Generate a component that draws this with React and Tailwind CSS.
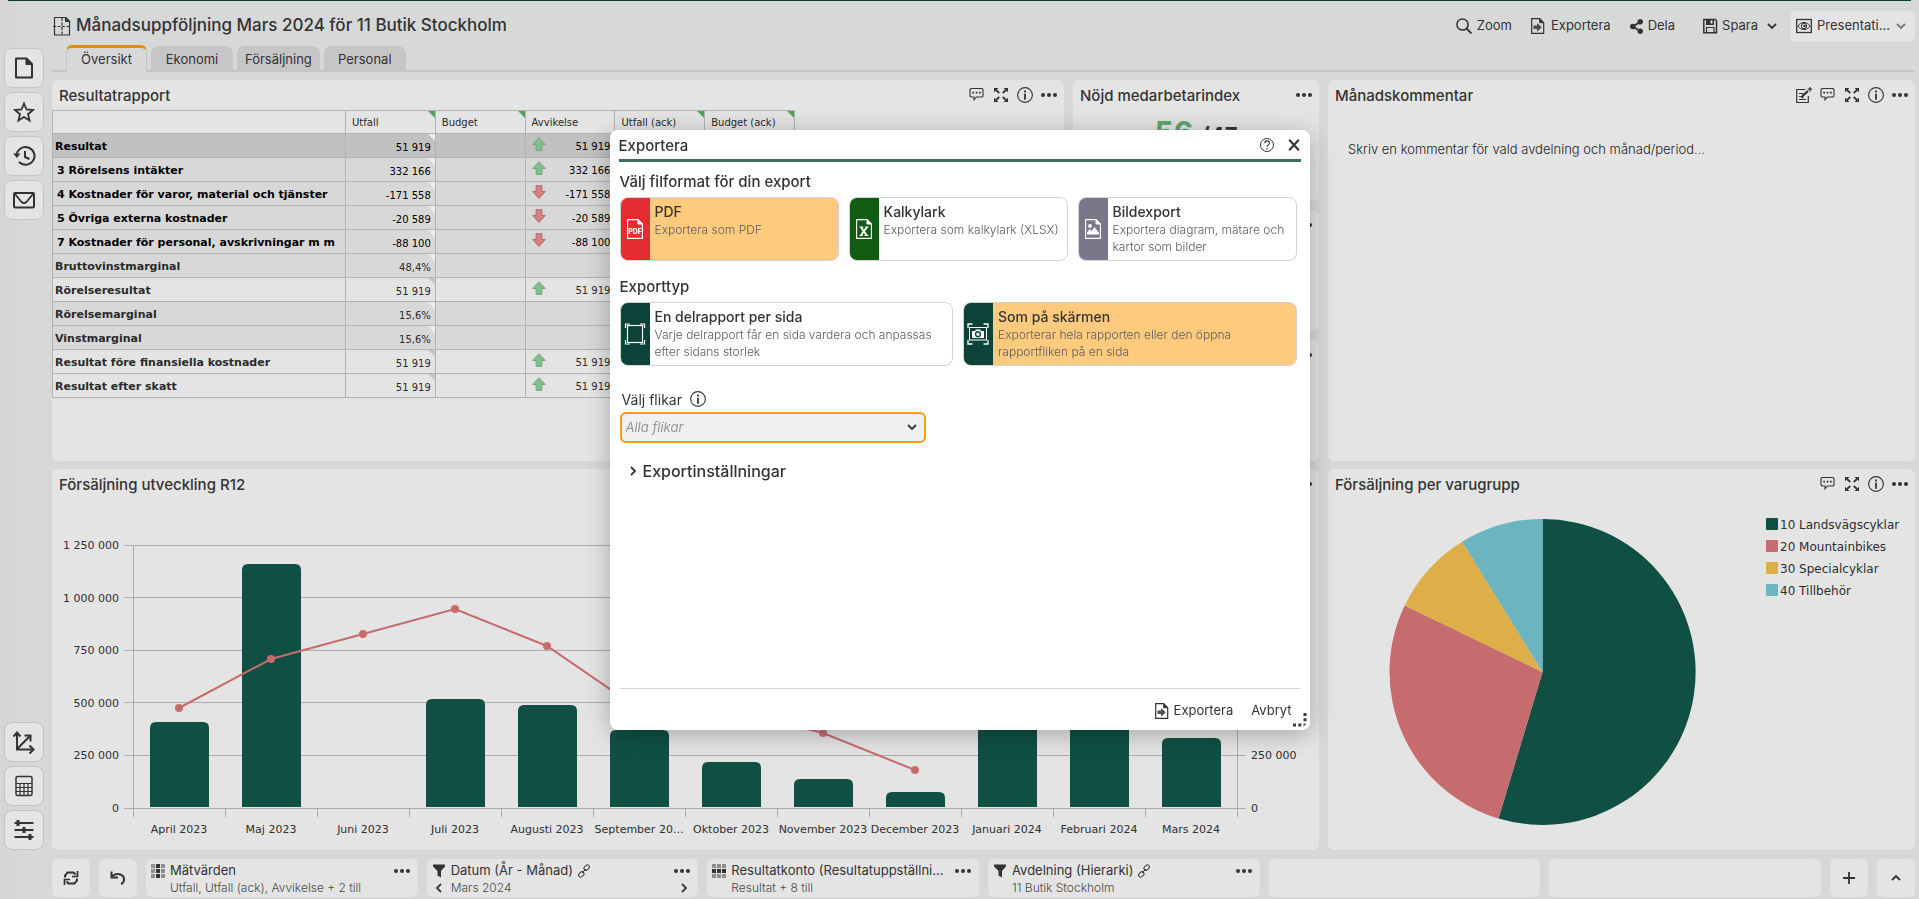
import React, { useState } from 'react';
import { FaShareAlt } from 'react-icons/fa';

const REPORT_ROWS = [
  { name: 'Resultat', value: '51 919', trend: 'up', tone: 'total' },
  { name: '3 Rörelsens intäkter', value: '332 166', trend: 'up', tone: 'sub' },
  { name: '4 Kostnader för varor, material och tjänster', value: '-171 558', trend: 'down', tone: 'sub' },
  { name: '5 Övriga externa kostnader', value: '-20 589', trend: 'down', tone: 'sub' },
  { name: '7 Kostnader för personal, avskrivningar m m', value: '-88 100', trend: 'down', tone: 'sub' },
  { name: 'Bruttovinstmarginal', value: '48,4%', tone: 'ratio' },
  { name: 'Rörelseresultat', value: '51 919', trend: 'up', tone: 'plain' },
  { name: 'Rörelsemarginal', value: '15,6%', tone: 'ratio' },
  { name: 'Vinstmarginal', value: '15,6%', tone: 'ratio' },
  { name: 'Resultat före finansiella kostnader', value: '51 919', trend: 'up', tone: 'plain' },
  { name: 'Resultat efter skatt', value: '51 919', trend: 'up', tone: 'plain' },
];

const ROW_TONES = {
  total: 'bg-[#c1c1c1] text-black',
  sub: 'bg-[#d8d8d8] text-black',
  ratio: 'bg-[#d8d8d8] text-[#2a2a2a]',
  plain: 'bg-[#e4e4e4] text-[#2a2a2a]',
};

const MONTHS = [
  { label: 'April 2023', bar: 86, line: 100 },
  { label: 'Maj 2023', bar: 244, line: 149 },
  { label: 'Juni 2023', bar: 0, line: 174 },
  { label: 'Juli 2023', bar: 109, line: 199 },
  { label: 'Augusti 2023', bar: 103, line: 162 },
  { label: 'September 20...', bar: 78, line: 99 },
  { label: 'Oktober 2023', bar: 46, line: 98 },
  { label: 'November 2023', bar: 29, line: 75 },
  { label: 'December 2023', bar: 16, line: 38 },
  { label: 'Januari 2024', bar: 110, line: null },
  { label: 'Februari 2024', bar: 120, line: null },
  { label: 'Mars 2024', bar: 70, line: null },
];

const LEVELS = ['0', '250 000', '500 000', '750 000', '1 000 000', '1 250 000'];

const LEGEND = [
  { label: '10 Landsvägscyklar', color: '#0f4f44' },
  { label: '20 Mountainbikes', color: '#c66b6e' },
  { label: '30 Specialcyklar', color: '#deaf48' },
  { label: '40 Tillbehör', color: '#6bb5c1' },
];

/* ---------- icons ---------- */

const Icon = ({ size = 16, box = 16, className = '', children }) => (
  <svg
    width={size}
    height={size}
    viewBox={`0 0 ${box} ${box}`}
    fill="none"
    stroke="currentColor"
    className={`shrink-0 ${className}`}
    aria-hidden="true"
  >
    {children}
  </svg>
);

const ReportIcon = () => (
  <Icon size={20} box={20}>
    <path d="M2.500 1.500h11l4 4v13.500h-15z" strokeWidth="1.200" />
    <path d="M13.500 1v4.500H18z" fill="currentColor" />
    <path d="M10 2v17M1 10.500h18" strokeWidth="1.200" strokeDasharray="3 1.500" />
  </Icon>
);

const PageIcon = () => (
  <Icon size={24} box={24}>
    <path d="M4 2.5h10.500L20 8v13.500H4z" strokeWidth="2" strokeLinejoin="round" />
    <path d="M14 2.500V8.500h6z" fill="currentColor" />
  </Icon>
);

const StarIcon = () => (
  <Icon size={24} box={24}>
    <path d="M12 3.500l2.500 6 6.500.500-5 4.200 1.600 6.300L12 17l-5.600 3.500L8 14.200 3 10l6.500-.5z" strokeWidth="1.800" />
  </Icon>
);

const HistoryIcon = () => (
  <Icon size={24} box={24}>
    <path d="M4.500 11.500A9 8.800 0 1 1 7 18" strokeWidth="2" />
    <path d="M1 9.500l4 4.500 3.500-4.500z" fill="currentColor" stroke="none" />
    <path d="M13 7v6l4.500 2" strokeWidth="2" />
  </Icon>
);

const MailIcon = () => (
  <Icon size={24} box={24}>
    <rect x="2" y="5" width="20" height="14.500" rx="1" strokeWidth="2" />
    <path d="M3 6l6.500 8a3.500 3.500 0 0 0 5 0L21 6" strokeWidth="1.800" />
  </Icon>
);

const AxesIcon = () => (
  <Icon size={24} box={24}>
    <path d="M5 3v16.500h16M5 19L18 6" strokeWidth="2" />
    <path d="M1.500 6.500L5 2.500l3.500 4M17.500 15.500l4 4-4 4M12.500 5.500h6v6" strokeWidth="2" />
  </Icon>
);

const CalculatorIcon = () => (
  <Icon size={24} box={24}>
    <rect x="4" y="2.500" width="16" height="19" rx="1.500" strokeWidth="1.500" />
    <path d="M4 9.500h16M4 13.500h16M4 17.500h16M8 9.500v12M12 9.500v12M16 9.500v12" strokeWidth="1.200" />
  </Icon>
);

const SlidersIcon = () => (
  <Icon size={24} box={24}>
    <path d="M2.500 5h19M2.500 12h19M2.500 19h19" strokeWidth="2" />
    <path d="M6 2v6M12 9v6M18 16v6" strokeWidth="3" />
  </Icon>
);

const SearchIcon = () => (
  <Icon>
    <circle cx="6.500" cy="6.500" r="5.600" strokeWidth="1.500" />
    <path d="M10.500 10.500l5 5" strokeWidth="1.800" />
  </Icon>
);

const ExportIcon = () => (
  <Icon>
    <path d="M1.700.7h8l4 4v10.600h-12z" strokeWidth="1.200" />
    <path d="M9.700.7v4h4z" fill="currentColor" />
    <path d="M3.500 7.500h3.500V4.900l4.800 4.400L7 13.700V11H3.500z" fill="currentColor" stroke="none" opacity=".85" />
  </Icon>
);

const SaveIcon = () => (
  <Icon>
    <path d="M1.800 1.500h11.500l1.200 1.300v12H1.800z" strokeWidth="1.500" />
    <path d="M4 1.500h8V7H4z" fill="currentColor" stroke="none" />
    <path d="M8.500 2.500h2v3h-2z" fill="#e4e4e4" stroke="none" />
    <path d="M4.500 15V9.500h7.500V15" strokeWidth="1.200" />
  </Icon>
);

const EyeIcon = () => (
  <Icon>
    <rect x=".7" y="1.500" width="14.600" height="13" strokeWidth="1.300" />
    <path d="M2 8c3-4.800 9-4.800 12 0-3 4.800-9 4.800-12 0z" />
    <circle cx="8" cy="8" r="2.700" />
    <circle cx="8.500" cy="8" r="1.300" fill="currentColor" stroke="none" />
  </Icon>
);

const ChevronIcon = ({ className = '' }) => (
  <Icon size={12} box={12} className={className}>
    <path d="M2 4l4 4 4-4" strokeWidth="1.800" />
  </Icon>
);

const CommentIcon = () => (
  <Icon>
    <path d="M2 1.500h11l1 1V9l-1 1H7.500L5 12.800V10H2L1 9V2.500z" strokeWidth="1.100" />
    <path d="M3.300 5.700H5M6.700 5.700h1.700M10 5.700h1.700" strokeWidth="1.700" />
  </Icon>
);

const ExpandIcon = () => (
  <Icon>
    <path d="M6.300 6L3 3M9.700 6L13 3M6.300 10L3 13M9.700 10l3.300 3" strokeWidth="1.700" />
    <path d="M1 1h4.500L1 5.300zM15 1h-4.500L15 5.300zM1 15h4.500L1 10.700zM15 15h-4.500l4.500-4.300z" fill="currentColor" stroke="none" />
  </Icon>
);

const InfoIcon = () => (
  <Icon>
    <circle cx="8" cy="8" r="7.400" strokeWidth="1.100" />
    <path d="M8 3.500v2M8 6.700v6" strokeWidth="1.800" />
  </Icon>
);

const DotsIcon = () => (
  <Icon>
    <g fill="currentColor" stroke="none">
      <circle cx="2" cy="8" r="2" />
      <circle cx="8" cy="8" r="2" />
      <circle cx="14" cy="8" r="2" />
    </g>
  </Icon>
);

const NoteIcon = () => (
  <Icon>
    <path d="M9.500 2.500H.7v13h11.600V9" strokeWidth="1.200" />
    <path d="M3 6.500h4M3 9.500h2.500M3 12.500h7" />
    <path d="M6 11l1-2.500L12 4" strokeWidth="2.200" />
    <path d="M14 0v4.500M11.800 2.200h4.400" strokeWidth="1.200" />
  </Icon>
);

const HelpIcon = () => (
  <Icon>
    <circle cx="8" cy="8" r="6.500" />
    <path d="M5.800 6.200c0-3.200 4.600-3 4.600-.2 0 1.900-2.300 1.900-2.300 4" strokeWidth="1.100" />
    <path d="M8 11.300v1.200" strokeWidth="1.300" />
  </Icon>
);

const CloseIcon = () => (
  <Icon size={14}>
    <path d="M2.500 2l11 12M13.500 2l-11 12" strokeWidth="2.300" />
  </Icon>
);

const RefreshIcon = () => (
  <Icon>
    <path d="M2 7.500V5.500l2.500-3h6l2 2M14 8.500v2l-2.500 3h-6l-2-2" strokeWidth="2" />
    <path d="M14.500 1v5.500H9M1.500 15V9.500H7" strokeWidth="1.700" />
  </Icon>
);

const UndoIcon = () => (
  <Icon>
    <path d="M2 6.500c4-4.500 12.500-2.500 12 3.500-.2 2-1.500 3.500-3 4" strokeWidth="2" />
    <path d="M1.500 1.500v6H8" strokeWidth="2" />
  </Icon>
);

const GridIcon = ({ axis }) => (
  <Icon size={14} box={14}>
    {[0, 1, 2].map((row) =>
      [0, 1, 2].map((col) => (
        <rect
          key={`${row}${col}`}
          x={col * 5}
          y={row * 5}
          width="4"
          height="4"
          stroke="none"
          fill={(axis === 'column' ? col : row) === 1 ? '#333333' : '#8e8e8e'}
        />
      ))
    )}
  </Icon>
);

const FilterIcon = () => (
  <Icon size={14} box={14}>
    <path d="M1 .5h12v2L9 7v6.500l-3.500-2V7L1 2.500z" fill="currentColor" stroke="none" />
  </Icon>
);

const LinkIcon = () => (
  <Icon size={14} box={14}>
    <rect x="7.700" y=".6" width="4" height="6" rx="2" transform="rotate(45 9.700 3.600)" />
    <rect x="2.300" y="7.400" width="4" height="6" rx="2" transform="rotate(45 4.300 10.400)" />
    <path d="M5 9l4-4" />
  </Icon>
);

const TrendArrow = ({ trend }) => (
  <Icon size={14} box={14} className={trend === 'down' ? 'rotate-180' : ''}>
    <path
      d="M7 .6L13.300 7.500H9.900V13.400H4.100V7.500H.7z"
      fill={trend === 'down' ? '#cc8484' : '#86bd8e'}
      stroke={trend === 'down' ? '#bd6468' : '#6aae76'}
    />
  </Icon>
);

const FileIcon = ({ children }) => (
  <svg width="16" height="20" viewBox="0 0 16 20" fill="none" stroke="#ffffff" aria-hidden="true">
    <path d="M.6.600h10.400l4.400 4.400v14.400H.6z" strokeWidth="1.100" />
    <path d="M11 .6V5h4.400z" fill="#ffffff" />
    {children}
  </svg>
);

const PdfIcon = () => (
  <FileIcon>
    <text x="8" y="15" textAnchor="middle" fill="#ffffff" stroke="none" className="font-['Inter',sans-serif] text-[7px] font-extrabold">
      PDF
    </text>
  </FileIcon>
);

const SheetIcon = () => (
  <FileIcon>
    <path d="M4.800 8l6 8.500M11 8l-6.200 8.500" strokeWidth="2" />
    <path d="M3.500 8h4M9 8h3.500M3.500 16.500H7M8.500 16.500h4" strokeWidth="1" />
  </FileIcon>
);

const ImageIcon = () => (
  <FileIcon>
    <circle cx="5" cy="7" r="1.900" fill="#ffffff" stroke="none" />
    <path d="M2 15.500v-2l2.500-3.500 2 2L9.500 8l4.500 6v1.500z" fill="#ffffff" stroke="none" />
  </FileIcon>
);

const FrameIcon = () => (
  <svg width="22" height="22" viewBox="0 0 22 22" fill="none" stroke="#ffffff" aria-hidden="true">
    <path d="M1.500 5V1H6M16 1h4.500v4M20.500 17v4H16M6 21H1.500v-4" strokeWidth="1.200" />
    <rect x="3.500" y="2.500" width="15" height="17" strokeWidth="1.200" />
  </svg>
);

const CameraIcon = () => (
  <svg width="22" height="22" viewBox="0 0 22 22" fill="none" stroke="#ffffff" aria-hidden="true">
    <path d="M1 5V1h4.500M16.500 1H21v4M21 17v4h-4.500M5.500 21H1v-4" strokeWidth="1.300" />
    <rect x="2.500" y="4.500" width="17" height="12.500" />
    <path d="M5 8h3l1-1.500h4L14 8h3v7H5z" fill="#ffffff" stroke="none" />
    <circle cx="11" cy="11.200" r="2.400" stroke="#0c4238" strokeWidth="1.400" />
  </svg>
);

/* ---------- building blocks ---------- */

const SideButton = ({ label, children }) => (
  <button
    aria-label={label}
    className="flex h-10 w-10 items-center justify-center rounded-lg border border-[#c3c3c3] bg-[#e4e4e4]"
  >
    {children}
  </button>
);

const Panel = ({ title, note, tools = true, className = '', children }) => (
  <section className={`flex min-w-0 flex-col rounded-md bg-[#e4e4e4] ${className}`}>
    <header className="flex h-[30px] items-center justify-between px-[7px]">
      <h2 className="truncate pt-[2px] text-[15px] font-medium">{title}</h2>
      <div className="flex items-center gap-2">
        {note && <button aria-label="Redigera"><NoteIcon /></button>}
        {tools && (
          <>
            <button aria-label="Kommentar"><CommentIcon /></button>
            <button aria-label="Maximera"><ExpandIcon /></button>
            <button aria-label="Information"><InfoIcon /></button>
          </>
        )}
        <button aria-label="Mer"><DotsIcon /></button>
      </div>
    </header>
    {children}
  </section>
);

const Corner = ({ className }) => (
  <svg width="7" height="7" viewBox="0 0 7 7" className={`absolute right-0 top-0 ${className}`} aria-hidden="true">
    <path d="M0 0h7v7z" fill="currentColor" />
  </svg>
);

const ReportTable = () => (
  <table className="w-[743px] table-fixed border-collapse font-['DejaVu_Sans',sans-serif] text-[10px]">
    <colgroup>
      <col className="w-[293px]" />
      <col />
      <col />
      <col />
      <col />
      <col />
    </colgroup>
    <thead>
      <tr className="h-[23px] text-left text-[#2a2a2a]">
        <th className="border border-[#b3b3b3]" aria-label="Konto" />
        {['Utfall', 'Budget', 'Avvikelse', 'Utfall (ack)', 'Budget (ack)'].map((title) => (
          <th key={title} className="relative border border-[#b3b3b3] px-1.5 font-normal">
            {title}
            {title !== 'Avvikelse' && <Corner className="text-[#4fa35f]" />}
          </th>
        ))}
      </tr>
    </thead>
    <tbody>
      {REPORT_ROWS.map((row) => (
        <tr key={row.name} className={`h-6 ${ROW_TONES[row.tone]}`}>
          <th
            className={`border border-[#b3b3b3] pt-[3px] text-left text-[11px] font-bold ${row.tone === 'sub' ? 'pl-1' : 'pl-[2px]'}`}
          >
            {row.name}
          </th>
          <td className="relative border border-[#b3b3b3] pt-[3px] pr-1 text-right">
            {row.value}
            <Corner className={row.tone === 'plain' ? 'text-[#c8c8c8]' : 'text-[#ededed]'} />
          </td>
          <td className="border border-[#b3b3b3]" />
          <td className="border border-[#b3b3b3] pl-1.5 pr-1">
            {row.trend && (
              <div className="flex items-center justify-between pb-[3px]">
                <TrendArrow trend={row.trend} />
                <span className="pt-1">{row.value}</span>
              </div>
            )}
          </td>
          <td className="border border-[#b3b3b3]" />
          <td className="border border-[#b3b3b3]" />
        </tr>
      ))}
    </tbody>
  </table>
);

const SalesChart = () => {
  const base = 309;
  const left = 81;
  const step = 92;
  const center = (i) => left + i * step + step / 2;
  const points = MONTHS.map((m, i) => ({ x: center(i), y: base - m.line, show: m.line !== null })).filter((p) => p.show);

  return (
    <svg viewBox="0 0 1267 351" className="w-full font-['DejaVu_Sans',sans-serif] text-[11px]" role="img" aria-label="Försäljning utveckling R12">
      <g stroke="#acacac" shapeRendering="crispEdges">
        {LEVELS.map((level, i) => (
          <line key={level} x1={left - 9} x2={left + 12 * step + 9} y1={base - i * 52.6} y2={base - i * 52.6} />
        ))}
        {[...MONTHS, null].map((m, i) => (
          <line key={i} x1={left + i * step} x2={left + i * step} y1={base} y2={base + 9} />
        ))}
        <line x1={left} x2={left} y1={base - 263} y2={base} />
        <line x1={left + 12 * step} x2={left + 12 * step} y1={base - 263} y2={base} />
      </g>
      <g fill="#2e2e2e">
        {LEVELS.map((level, i) => (
          <text key={level} x={left - 14} y={base + 4 - i * 52.6} textAnchor="end">{level}</text>
        ))}
        {LEVELS.slice(0, 2).map((level, i) => (
          <text key={level} x={left + 12 * step + 14} y={base + 4 - i * 52.6}>{level}</text>
        ))}
        {MONTHS.map((m, i) => (
          <text key={m.label} x={center(i)} y={base + 25} textAnchor="middle">{m.label}</text>
        ))}
      </g>
      {MONTHS.map((m, i) =>
        m.bar > 0 ? (
          <path
            key={m.label}
            d={`M${center(i) - 29} ${base - 1}v${7 - m.bar}q0 -6 6 -6h47q6 0 6 6v${m.bar - 7}z`}
            fill="#0f4f44"
          />
        ) : null
      )}
      <polyline points={points.map((p) => `${p.x},${p.y}`).join(' ')} fill="none" stroke="#c66b6e" strokeWidth="2" />
      {points.map((p) => (
        <circle key={p.x} cx={p.x} cy={p.y} r="4" fill="#c66b6e" />
      ))}
    </svg>
  );
};

const GroupChart = () => (
  <svg viewBox="0 0 587 351" className="w-full font-['DejaVu_Sans',sans-serif] text-[12px]" role="img" aria-label="Försäljning per varugrupp">
    <path d="M214.500 173V20a153 153 0 1 1-44 299.500z" fill="#0f4f44" />
    <path d="M214.500 173L170.500 319.500A153 153 0 0 1 76.700 106.500z" fill="#c66b6e" />
    <path d="M214.500 173L76.700 106.500A153 153 0 0 1 134.200 42.800z" fill="#deaf48" />
    <path d="M214.500 173L134.200 42.800A153 153 0 0 1 214.500 20z" fill="#6bb5c1" />
    {LEGEND.map((item, i) => (
      <g key={item.label}>
        <rect x="438" y={19 + i * 22} width="12" height="12" rx="1" fill={item.color} />
        <text x="452" y={30 + i * 22} fill="#2e2e2e">{item.label}</text>
      </g>
    ))}
  </svg>
);

const FilterCard = ({ icon, title, value, linked, stepper }) => (
  <div className="flex h-[38px] min-w-0 flex-1 flex-col justify-center rounded-md bg-[#e4e4e4] px-1 pt-[2px]">
    <div className="flex h-[18px] items-center gap-1">
      <span className="flex w-4 justify-center">{icon}</span>
      <span className="truncate text-[13px]">{title}</span>
      {linked && <LinkIcon />}
      <button aria-label={`Mer ${title}`} className="ml-auto px-1"><DotsIcon /></button>
    </div>
    <div className="flex h-4 items-center gap-1 text-[12px] font-light text-[#4a4a4a]">
      <span className="flex w-4 justify-center text-[#3a3a3a]">
        {stepper && <button aria-label="Föregående"><ChevronIcon className="rotate-90" /></button>}
      </span>
      <span className="truncate">{value}</span>
      {stepper && (
        <button aria-label="Nästa" className="ml-auto pr-1 text-[#3a3a3a]"><ChevronIcon className="-rotate-90" /></button>
      )}
    </div>
  </div>
);

const SquareButton = ({ label, children }) => (
  <button aria-label={label} className="flex h-[38px] w-[38px] shrink-0 items-center justify-center rounded-md bg-[#e4e4e4]">
    {children}
  </button>
);

const OptionCard = ({ group, icon, stripClass, title, text, checked, onSelect }) => (
  <label
    className={`flex h-16 min-w-0 flex-1 cursor-pointer overflow-hidden rounded-lg border border-[#d3d3d3] ${checked ? 'bg-[#fecb7e]' : 'bg-white'}`}
  >
    <input type="radio" name={group} checked={checked} onChange={onSelect} className="sr-only" />
    <span className={`-my-px -ml-px flex w-[30px] shrink-0 items-center justify-center ${stripClass}`}>{icon}</span>
    <span className="flex flex-col pl-[5px] pt-[5px]">
      <span className="text-[14px] leading-[18px] font-medium">{title}</span>
      <span className="text-[12px] leading-[17px] font-light text-[#5c5c5c]">{text}</span>
    </span>
  </label>
);

const ExportDialog = () => {
  const [format, setFormat] = useState('pdf');
  const [type, setType] = useState('screen');

  return (
    <div className="fixed inset-x-0 top-[130px] flex justify-center">
      <div
        role="dialog"
        aria-label="Exportera"
        className="relative flex min-h-[600px] w-[700px] flex-col rounded-lg bg-white px-[10px] shadow-[0_4px_24px_rgba(0,0,0,0.28)]"
      >
        <header className="-mx-px flex h-8 items-center justify-between border-b-[3px] border-[#3d6e63]">
          <h2 className="pt-1 text-[15px] font-medium">Exportera</h2>
          <div className="flex items-center gap-3">
            <button aria-label="Hjälp"><HelpIcon /></button>
            <button aria-label="Stäng"><CloseIcon /></button>
          </div>
        </header>

        <div className="flex-1 pr-[3px]">
          <h3 className="mt-[10px] text-[15px] leading-5 font-medium">Välj filformat för din export</h3>
          <div className="mt-[5px] flex gap-[10px]">
            <OptionCard group="format" icon={<PdfIcon />} stripClass="bg-[#e32d31]" title="PDF" text="Exportera som PDF" checked={format === 'pdf'} onSelect={() => setFormat('pdf')} />
            <OptionCard group="format" icon={<SheetIcon />} stripClass="bg-[#125b12]" title="Kalkylark" text="Exportera som kalkylark (XLSX)" checked={format === 'xlsx'} onSelect={() => setFormat('xlsx')} />
            <OptionCard group="format" icon={<ImageIcon />} stripClass="bg-[#7a778b]" title="Bildexport" text="Exportera diagram, mätare och kartor som bilder" checked={format === 'image'} onSelect={() => setFormat('image')} />
          </div>

          <h3 className="mt-4 text-[15px] leading-5 font-medium">Exporttyp</h3>
          <div className="mt-[5px] flex gap-[10px]">
            <OptionCard group="type" icon={<FrameIcon />} stripClass="bg-[#0c4238]" title="En delrapport per sida" text="Varje delrapport får en sida vardera och anpassas efter sidans storlek" checked={type === 'page'} onSelect={() => setType('page')} />
            <OptionCard group="type" icon={<CameraIcon />} stripClass="bg-[#0c4238]" title="Som på skärmen" text="Exporterar hela rapporten eller den öppna rapportfliken på en sida" checked={type === 'screen'} onSelect={() => setType('screen')} />
          </div>

          <div className="mt-[23px] flex h-5 items-center gap-2 pl-[2px] text-[14px]">
            <label htmlFor="tabs-select">Välj flikar</label>
            <InfoIcon />
          </div>
          <div className="relative mt-[3px] w-[306px]">
            <select
              id="tabs-select"
              className="h-[31px] w-full appearance-none rounded-md border-2 border-[#fd9b08] bg-[#eff0f1] px-1 text-[13px] text-[#959595] italic outline-none"
            >
              <option>Alla flikar</option>
            </select>
            <ChevronIcon className="pointer-events-none absolute right-2 top-[9px]" />
          </div>

          <button className="mt-[18px] flex h-5 items-center gap-1 pl-[7px] text-[16px] font-medium">
            <ChevronIcon className="-rotate-90" />
            Exportinställningar
          </button>
        </div>

        <footer className="flex h-[42px] items-center justify-end gap-[18px] border-t border-[#d3d3d3] pt-[2px] pr-2 text-[13px]">
          <button className="flex items-center gap-1">
            <ExportIcon />
            Exportera
          </button>
          <button>Avbryt</button>
        </footer>
        <svg width="14" height="14" viewBox="0 0 14 14" className="absolute right-[3px] bottom-[3px]" fill="#3a3a3a" aria-hidden="true">
          <path d="M10.500 0h3v3h-3zM10.500 5.300h3v3h-3zM10.500 10.500h3l-3 3zM5.300 10.500h3v3h-3zM0 10.500h3v3H0z" />
        </svg>
      </div>
    </div>
  );
};

const App = () => {
  const [activeTab, setActiveTab] = useState('Översikt');

  return (
    <div className="flex min-h-screen flex-col bg-[#d7d9d8] bg-linear-to-r from-[#d7d5d5] to-[#d7d9d8] to-[48px] font-['Inter',sans-serif] text-[#333333]">
      <div className="mx-2 h-px bg-[#0b3f35]" />
      <div className="flex flex-1">
        <nav className="flex w-[52px] shrink-0 flex-col gap-1 pt-[47px] pl-1 pb-[49px]">
          <SideButton label="Rapporter"><PageIcon /></SideButton>
          <SideButton label="Favoriter"><StarIcon /></SideButton>
          <SideButton label="Historik"><HistoryIcon /></SideButton>
          <SideButton label="Meddelanden"><MailIcon /></SideButton>
          <div className="flex-1" />
          <SideButton label="Axlar"><AxesIcon /></SideButton>
          <SideButton label="Kalkylator"><CalculatorIcon /></SideButton>
          <SideButton label="Inställningar"><SlidersIcon /></SideButton>
        </nav>

        <main className="flex min-w-0 flex-1 flex-col pr-1 pb-[2px]">
          <div className="flex h-11 items-center justify-between pt-1.5">
            <div className="flex items-center gap-1">
              <ReportIcon />
              <h1 className="text-[17px] font-medium">Månadsuppföljning Mars 2024 för 11 Butik Stockholm</h1>
            </div>
            <div className="flex items-center text-[13px]">
              <button className="mr-[18px] flex items-center gap-[5px]"><SearchIcon />Zoom</button>
              <button className="mr-[18px] flex items-center gap-[5px]"><ExportIcon />Exportera</button>
              <button className="mr-[27px] flex items-center gap-1"><FaShareAlt size={15} />Dela</button>
              <button className="mr-3 flex items-center gap-1"><SaveIcon />Spara<ChevronIcon className="ml-1" /></button>
              <div className="flex h-[31px] w-[125px] items-center gap-[5px] rounded-md bg-[#e4e4e4] pl-[6px] pr-2">
                <EyeIcon />
                <select aria-label="Läge" className="min-w-0 flex-1 appearance-none bg-transparent">
                  <option>Presentati...</option>
                </select>
                <ChevronIcon className="pointer-events-none text-[#777777]" />
              </div>
            </div>
          </div>

          <div role="tablist" className="flex h-[27px] items-end gap-1 border-b-2 border-[#c5c6c6] pl-[14px]">
            {['Översikt', 'Ekonomi', 'Försäljning', 'Personal'].map((tab) => (
              <button
                key={tab}
                role="tab"
                aria-selected={tab === activeTab}
                onClick={() => setActiveTab(tab)}
                className={
                  tab === activeTab
                    ? '-mb-[2px] h-[27px] min-w-[81px] rounded-t-md border-x border-t-[3px] border-x-[#c5c6c6] border-t-[#e88a00] bg-[#d7d9d8] px-2 text-[13px]'
                    : 'h-6 min-w-[82px] rounded-t-lg bg-[#c6c6c8] px-2 pt-1 text-[13px]'
                }
              >
                {tab}
              </button>
            ))}
          </div>

          <div className="mt-2 grid flex-1 grid-cols-[1012fr_246fr_587fr] grid-rows-2 gap-x-[9px] gap-y-2">
            <Panel title="Resultatrapport">
              <ReportTable />
            </Panel>
            <div className="flex min-w-0 flex-col gap-[9px]">
              <Panel title="Nöjd medarbetarindex" tools={false} className="flex-1">
                <p className="flex items-baseline justify-center gap-2 text-[22px] leading-[44px] font-bold">
                  <span className="text-[30px] text-[#5da56e]">56</span>
                  /47
                </p>
              </Panel>
              <Panel title="" tools={false} className="flex-1" />
              <Panel title="" tools={false} className="flex-1" />
            </div>
            <Panel title="Månadskommentar" note>
              <p className="px-5 pt-[30px] text-[13px] font-light text-[#222222]">Skriv en kommentar för vald avdelning och månad/period...</p>
            </Panel>
            <Panel title="Försäljning utveckling R12" className="col-span-2">
              <SalesChart />
            </Panel>
            <Panel title="Försäljning per varugrupp">
              <GroupChart />
            </Panel>
          </div>

          <footer className="mt-[9px] flex gap-[9px]">
            <SquareButton label="Uppdatera"><RefreshIcon /></SquareButton>
            <SquareButton label="Ångra"><UndoIcon /></SquareButton>
            <FilterCard icon={<GridIcon axis="column" />} title="Mätvärden" value="Utfall, Utfall (ack), Avvikelse + 2 till" />
            <FilterCard icon={<FilterIcon />} title="Datum (År - Månad)" value="Mars 2024" linked stepper />
            <FilterCard icon={<GridIcon axis="row" />} title="Resultatkonto (Resultatuppställni..." value="Resultat + 8 till" />
            <FilterCard icon={<FilterIcon />} title="Avdelning (Hierarki)" value="11 Butik Stockholm" linked />
            <div className="flex-1 rounded-md bg-[#e4e4e4] px-1" />
            <div className="flex-1 rounded-md bg-[#e4e4e4] px-1" />
            <SquareButton label="Lägg till">
              <Icon size={14} box={14}><path d="M7 1v12M1 7h12" strokeWidth="1.800" /></Icon>
            </SquareButton>
            <SquareButton label="Visa mer"><ChevronIcon className="rotate-180" /></SquareButton>
          </footer>
        </main>
      </div>

      <ExportDialog />
    </div>
  );
};

export default App;
